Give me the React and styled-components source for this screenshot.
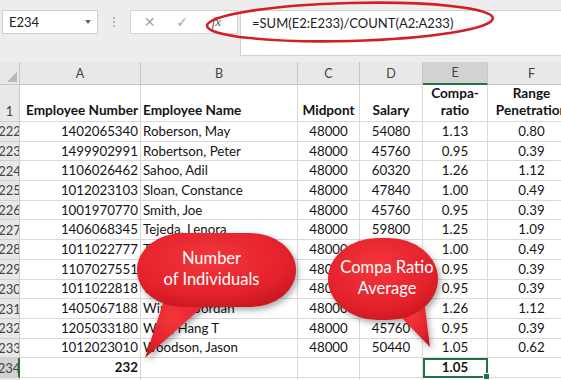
import styled, { createGlobalStyle } from "styled-components";

const GlobalStyle = createGlobalStyle`
  html, body { margin: 0; padding: 0; background: #fff; }
  body { font-family: Lato, "Liberation Sans", sans-serif; }
`

const COLS = "20px 121px 157px 62px 63px 65px 88px";

const Sheet = styled.div`
  position: relative;
  width: 561px;
  height: 380px;
  overflow: hidden;
  background: #fff;
`

const FormulaBar = styled.div`
  display: flex;
  align-items: flex-start;
  height: 62px;
  padding: 10px 0 0 2px;
  box-sizing: border-box;
  background: #ededed;
  color: #222;
`

const NameBox = styled.div`
  display: flex;
  align-items: center;
  justify-content: space-between;
  width: 96px;
  height: 24px;
  padding: 0 6px;
  box-sizing: border-box;
  background: #fff;
  border: 1px solid #cfcfcf;
  font-size: 13px;
`

const Caret = styled.span`
  width: 0;
  height: 0;
  border-left: 3px solid transparent;
  border-right: 3px solid transparent;
  border-top: 4px solid #666;
`

const Grip = styled.div`
  width: 32px;
  height: 24px;
  display: flex;
  flex-direction: column;
  align-items: center;
  justify-content: center;
  gap: 2px;
  span { width: 2px; height: 2px; background: #b5b5b5; }
`

const ButtonBox = styled.div`
  display: flex;
  align-items: center;
  width: 108px;
  height: 24px;
  background: #fff;
  border: 1px solid #d6d6d6;
  box-sizing: border-box;
`

const BarButton = styled.span`
  width: ${(p) => p.w}px;
  text-align: center;
  font-family: ${(p) => (p.fx ? '"Liberation Serif", serif' : '"DejaVu Sans", sans-serif')};
  font-style: ${(p) => (p.fx ? "italic" : "normal")};
  font-size: ${(p) => (p.fx ? "13px" : "14px")};
  color: ${(p) => (p.fx ? "#555" : "#a5a5a5")};
`

const FormulaInput = styled.div`
  flex: 1;
  height: 46px;
  margin-left: 2px;
  padding: 4px 10px 0 11px;
  box-sizing: border-box;
  background: #fff;
  border: 1px solid #d0d0d0;
  border-right: none;
  font-size: 13px;
  color: #222;
`

const Grid = styled.div`
  display: grid;
  grid-template-columns: ${COLS};
  grid-template-rows: 23px 37px;
  grid-auto-rows: 19.7px;
  font-size: 13.3px;
  color: #141414;
`

const ColHead = styled.div`
  display: flex;
  align-items: center;
  justify-content: center;
  background: ${(p) => (p.active ? "#d2d2d2" : "#e8e8e8")};
  border-right: 1px solid #c8c8c8;
  border-bottom: ${(p) => (p.active ? "2px solid #217346" : "1px solid #c8c8c8")};
  box-sizing: border-box;
  color: #444;
  font-size: 12.5px;
  position: relative;
`

const Corner = styled(ColHead)`
  &::after {
    content: "";
    position: absolute;
    right: 2px;
    bottom: 2px;
    border-left: 10px solid transparent;
    border-bottom: 10px solid #b8b8b8;
  }
`

const RowHead = styled.div`
  display: flex;
  align-items: ${(p) => (p.tall ? "flex-end" : "center")};
  justify-content: center;
  padding-bottom: ${(p) => (p.tall ? "2px" : "0")};
  background: ${(p) => (p.active ? "#d2d2d2" : "#e8e8e8")};
  border-right: ${(p) => (p.active ? "2px solid #217346" : "1px solid #c8c8c8")};
  border-bottom: 1px solid #cfcfcf;
  box-sizing: border-box;
  color: #444;
  font-size: 13px;
  overflow: hidden;
  white-space: nowrap;
`

const Cell = styled.div`
  display: flex;
  align-items: ${(p) => (p.tall ? "flex-end" : "center")};
  justify-content: ${(p) =>
    p.align === "right" ? "flex-end" : p.align === "center" ? "center" : "flex-start"};
  padding: ${(p) => (p.tall ? "0 2px 2px" : "0 2px")};
  border-right: 1px solid #d9d9d9;
  border-bottom: 1px solid #d9d9d9;
  box-sizing: border-box;
  font-weight: ${(p) => (p.bold ? 700 : 400)};
  font-size: ${(p) => (p.tall ? "13.6px" : "inherit")};
  line-height: 17px;
  white-space: nowrap;
  position: relative;
  ${(p) =>
    p.selected &&
    `
    outline: 2px solid #217346;
    outline-offset: -2px;
    z-index: 1;
    &::after {
      content: "";
      position: absolute;
      right: -3px;
      bottom: -3px;
      width: 5px;
      height: 5px;
      background: #217346;
      border: 1px solid #fff;
    }
  `}
`

const HeadText = styled.span`
  display: block;
  text-align: center;
`

const Ring = styled.svg`
  position: absolute;
  left: 200px;
  top: 0;
  overflow: visible;
`

const Callout = styled.div`
  position: absolute;
  left: ${(p) => p.x}px;
  top: ${(p) => p.y}px;
  width: ${(p) => p.w}px;
  height: ${(p) => p.h}px;
  z-index: 3;
  svg {
    position: absolute;
    inset: 0;
    overflow: visible;
    filter: drop-shadow(2px 3px 3px rgba(0, 0, 0, 0.35));
  }
`

const CalloutText = styled.div`
  position: absolute;
  left: ${(p) => p.tx}px;
  top: ${(p) => p.ty}px;
  width: ${(p) => p.tw}px;
  text-align: center;
  color: #fff;
  font-size: 16.5px;
  line-height: 21px;
  white-space: pre;
`

const rows = [
  [222, "1402065340", "Roberson, May", "48000", "54080", "1.13", "0.80"],
  [223, "1499902991", "Robertson, Peter", "48000", "45760", "0.95", "0.39"],
  [224, "1106026462", "Sahoo, Adil", "48000", "60320", "1.26", "1.12"],
  [225, "1012023103", "Sloan, Constance", "48000", "47840", "1.00", "0.49"],
  [226, "1001970770", "Smith, Joe", "48000", "45760", "0.95", "0.39"],
  [227, "1406068345", "Tejeda, Lenora", "48000", "59800", "1.25", "1.09"],
  [228, "1011022777", "Thomas, Ann", "48000", "47840", "1.00", "0.49"],
  [229, "1107027551", "Tran, Kim", "48000", "45760", "0.95", "0.39"],
  [230, "1011022818", "Walker, Lee", "48000", "45760", "0.95", "0.39"],
  [231, "1405067188", "Winters, Jordan", "48000", "60320", "1.26", "1.12"],
  [232, "1205033180", "Wolf, Hang  T", "48000", "45760", "0.95", "0.39"],
  [233, "1012023010", "Woodson, Jason", "48000", "50440", "1.05", "0.62"],
];

const Bubble = ({ w, h, body, tail, id }) => (
  <svg width={w} height={h} viewBox={`0 0 ${w} ${h}`}>
    <defs>
      <radialGradient id={id} cx="45%" cy="35%" r="70%">
        <stop offset="0%" stopColor="#f3363c" />
        <stop offset="70%" stopColor="#e4222b" />
        <stop offset="100%" stopColor="#c9161f" />
      </radialGradient>
    </defs>
    <path d={tail} fill={`url(#${id})`} />
    <rect {...body} fill={`url(#${id})`} />
  </svg>
)

const App = () => {
  return (
    <Sheet>
      <GlobalStyle />
      <FormulaBar>
        <NameBox>
          E234
          <Caret />
        </NameBox>
        <Grip>
          <span />
          <span />
          <span />
        </Grip>
        <ButtonBox>
          <BarButton w={38}>✕</BarButton>
          <BarButton w={28}>✓</BarButton>
          <BarButton w={42} fx>
            fx
          </BarButton>
        </ButtonBox>
        <FormulaInput>=SUM(E2:E233)/COUNT(A2:A233)</FormulaInput>
      </FormulaBar>

      <Grid>
        <Corner />
        <ColHead>A</ColHead>
        <ColHead>B</ColHead>
        <ColHead>C</ColHead>
        <ColHead>D</ColHead>
        <ColHead active>E</ColHead>
        <ColHead>F</ColHead>

        <RowHead tall>1</RowHead>
        <Cell tall bold align="right">Employee Number</Cell>
        <Cell tall bold>Employee Name</Cell>
        <Cell tall bold align="center">Midpont</Cell>
        <Cell tall bold align="center">Salary</Cell>
        <Cell tall bold align="center">
          <HeadText>
            Compa-
            <br />
            ratio
          </HeadText>
        </Cell>
        <Cell tall bold align="center">
          <HeadText>
            Range
            <br />
            Penetration
          </HeadText>
        </Cell>

        {rows.map((r) => [
          <RowHead key={`h${r[0]}`}>{r[0]}</RowHead>,
          <Cell key={`a${r[0]}`} align="right">{r[1]}</Cell>,
          <Cell key={`b${r[0]}`}>{r[2]}</Cell>,
          <Cell key={`c${r[0]}`} align="center">{r[3]}</Cell>,
          <Cell key={`d${r[0]}`} align="center">{r[4]}</Cell>,
          <Cell key={`e${r[0]}`} align="center">{r[5]}</Cell>,
          <Cell key={`f${r[0]}`} align="center">{r[6]}</Cell>,
        ])}

        <RowHead active>234</RowHead>
        <Cell bold align="right">232</Cell>
        <Cell />
        <Cell />
        <Cell />
        <Cell bold align="center" selected>1.05</Cell>
        <Cell />
        <RowHead>235</RowHead>
        <Cell />
        <Cell />
        <Cell />
        <Cell />
        <Cell />
        <Cell />
      </Grid>

      <Ring width="300" height="46">
        <ellipse
          cx="150"
          cy="22"
          rx="143"
          ry="19"
          fill="none"
          stroke="#d21f26"
          strokeWidth="2.6"
          transform="rotate(-1.5 150 22)"
        />
      </Ring>

      <Callout x={130} y={228} w={175} h={135}>
        <Bubble
          id="g1"
          w={175}
          h={135}
          body={{ x: 7, y: 5, width: 159, height: 74, rx: 46, ry: 37 }}
          tail="M 36 66 L 15 130 L 78 74 Z"
        />
        <CalloutText tx={2} ty={20} tw={159}>
          {"Number\nof Individuals"}
        </CalloutText>
      </Callout>

      <Callout x={320} y={230} w={125} h={125}>
        <Bubble
          id="g2"
          w={125}
          h={125}
          body={{ x: 8, y: 8, width: 110, height: 82, rx: 50, ry: 41 }}
          tail="M 78 84 L 110 117 L 104 70 Z"
        />
        <CalloutText tx={12} ty={27} tw={110}>
          {"Compa Ratio\nAverage"}
        </CalloutText>
      </Callout>
    </Sheet>
  )
}

export default App
